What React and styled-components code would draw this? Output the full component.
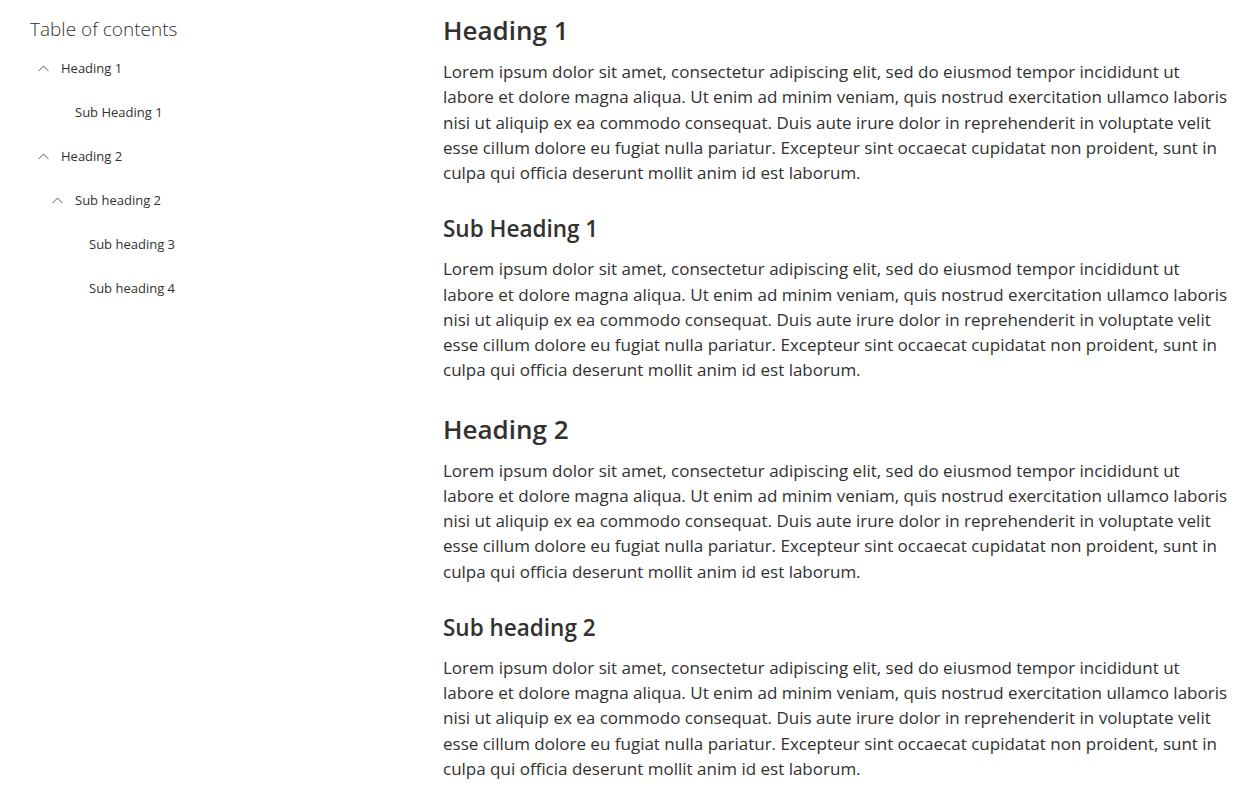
import React from "react";
import styled, { createGlobalStyle } from "styled-components";

const GlobalStyle = createGlobalStyle`
  html, body {
    margin: 0;
    padding: 0;
    background: #ffffff;
  }
  body {
    font-family: "Open Sans", "Noto Sans", sans-serif;
    color: #323130;
    -webkit-font-smoothing: antialiased;
  }
`;

const Page = styled.div`
  display: grid;
  grid-template-columns: 443px 788px;
  min-height: 100vh;
`;

const Sidebar = styled.nav`
  padding: 13px 0 0 30px;
`;

const TocTitle = styled.div`
  font-size: 19px;
  font-weight: 300;
  line-height: 32px;
  color: #323130;
  margin-bottom: 1px;
`;

const TocList = styled.ul`
  list-style: none;
  margin: 0;
  padding: 0;
`;

const TocRow = styled.li`
  display: flex;
  align-items: center;
  height: 44px;
  padding-left: ${(p) => 8 + p.$level * 14}px;
  font-size: 13px;
  color: #323130;
  cursor: pointer;
`;

const IconSlot = styled.span`
  display: inline-flex;
  align-items: center;
  justify-content: flex-start;
  width: 23px;
  flex: none;
  color: #605e5c;
`;

const Main = styled.main`
  padding-top: 12px;
`;

const Section = styled.section`
  margin-bottom: ${(p) => (p.$beforeMinor ? 29 : 28)}px;
`;

const Heading = styled.h2`
  margin: 0 0 ${(p) => (p.$major ? 11 : 12)}px;
  font-size: ${(p) => (p.$major ? 26 : 22.5)}px;
  line-height: ${(p) => (p.$major ? 36 : 30)}px;
  font-weight: 600;
  color: #323130;
`;

const Paragraph = styled.p`
  margin: 0;
  font-size: 17px;
  line-height: 25.25px;
  color: #323130;
`;

const Chevron = () => (
  <svg width="11" height="7" viewBox="0 0 11 7" fill="none">
    <path d="M0.5 6.2 L5.5 1 L10.5 6.2" stroke="currentColor" strokeWidth="1" />
  </svg>
);

const toc = [
  { label: "Heading 1", level: 0, expandable: true },
  { label: "Sub Heading 1", level: 1 },
  { label: "Heading 2", level: 0, expandable: true },
  { label: "Sub heading 2", level: 1, expandable: true },
  { label: "Sub heading 3", level: 2 },
  { label: "Sub heading 4", level: 2 },
];

const lorem =
  "Lorem ipsum dolor sit amet, consectetur adipiscing elit, sed do eiusmod tempor incididunt ut labore et dolore magna aliqua. Ut enim ad minim veniam, quis nostrud exercitation ullamco laboris nisi ut aliquip ex ea commodo consequat. Duis aute irure dolor in reprehenderit in voluptate velit esse cillum dolore eu fugiat nulla pariatur. Excepteur sint occaecat cupidatat non proident, sunt in culpa qui officia deserunt mollit anim id est laborum.";

const sections = [
  { title: "Heading 1", major: true },
  { title: "Sub Heading 1", major: false },
  { title: "Heading 2", major: true },
  { title: "Sub heading 2", major: false },
];

export default function App() {
  return (
    <>
      <GlobalStyle />
      <Page>
        <Sidebar>
          <TocTitle>Table of contents</TocTitle>
          <TocList>
            {toc.map((item) => (
              <TocRow key={item.label} $level={item.level}>
                <IconSlot>{item.expandable && <Chevron />}</IconSlot>
                {item.label}
              </TocRow>
            ))}
          </TocList>
        </Sidebar>
        <Main>
          {sections.map((s, i) => (
            <Section key={s.title} $beforeMinor={sections[i + 1] && !sections[i + 1].major}>
              <Heading $major={s.major}>{s.title}</Heading>
              <Paragraph>{lorem}</Paragraph>
            </Section>
          ))}
        </Main>
      </Page>
    </>
  );
}
